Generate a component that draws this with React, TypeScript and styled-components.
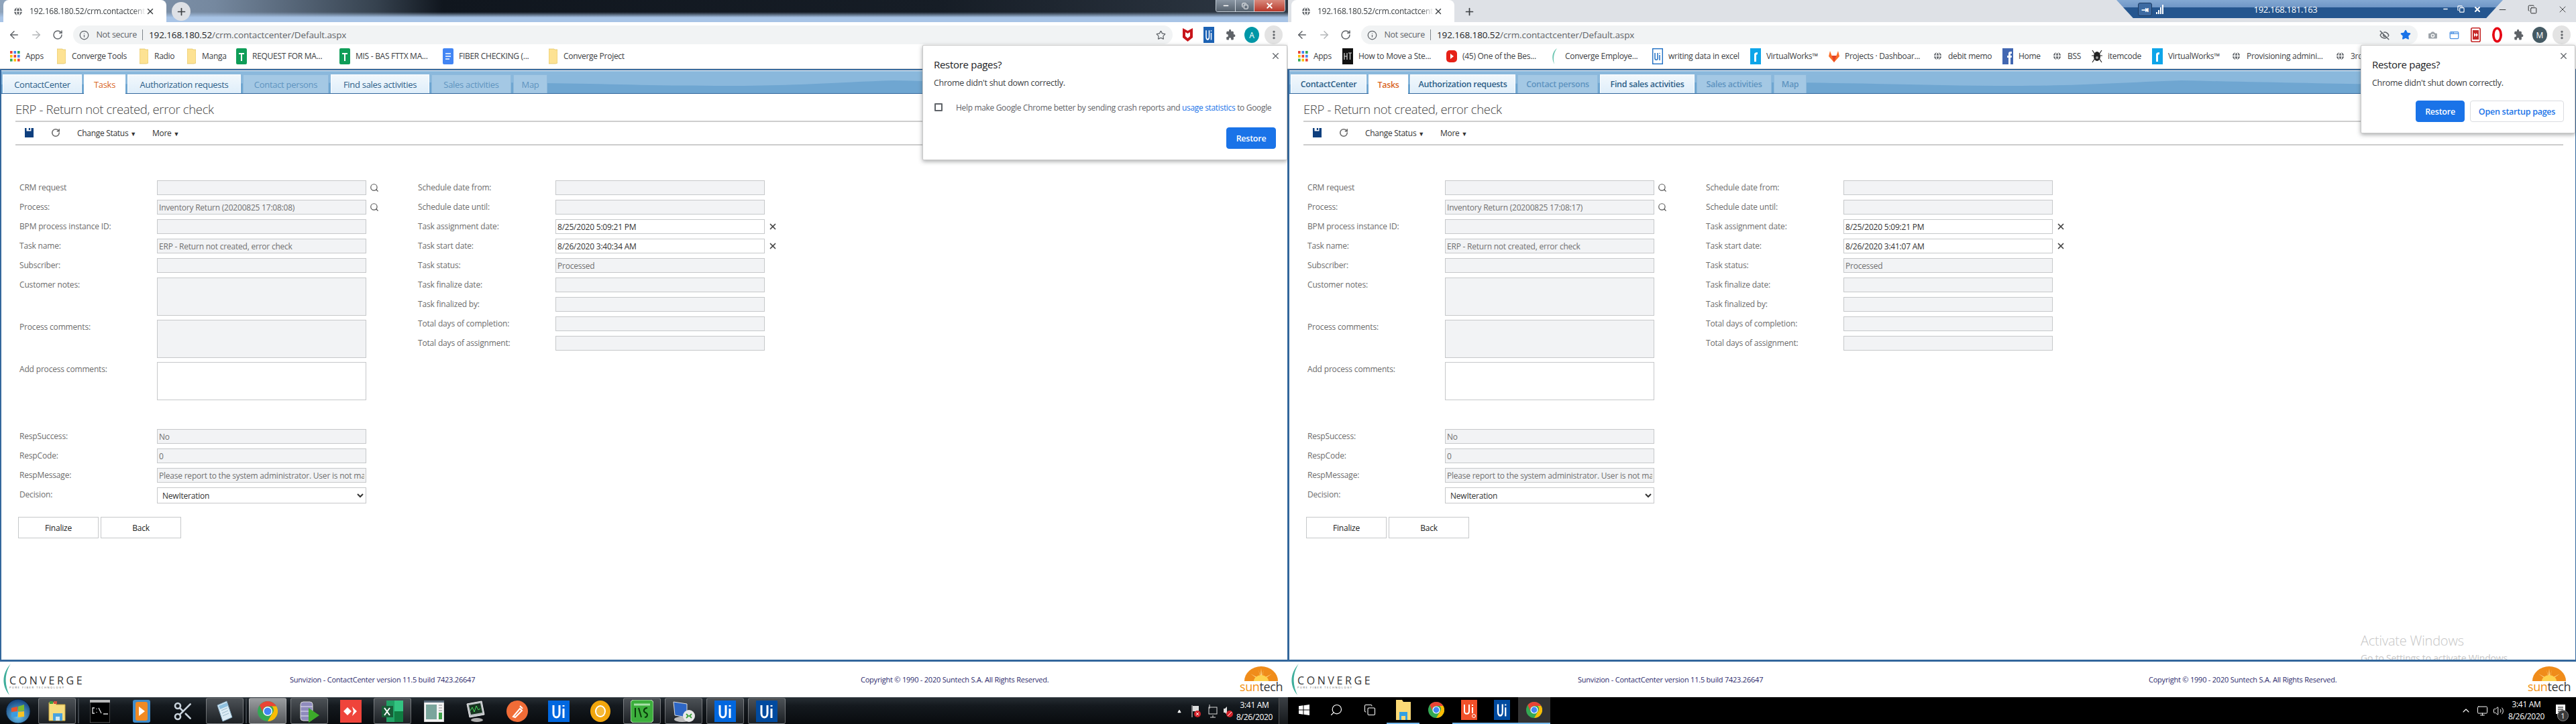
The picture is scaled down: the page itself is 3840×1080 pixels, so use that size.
import React from 'react';
import styled, { createGlobalStyle } from 'styled-components';
import {
  ArrowLeft, ArrowRight, RotateCw, Info, Star, X, Plus, Search, EyeOff, Globe, MoreVertical,
  Minus, Copy, Camera, AppWindow, ChevronUp, Monitor, Volume2, Scissors, Triangle,
} from 'lucide-react';

const FONT = '"Open Sans", "Noto Sans", "Liberation Sans", sans-serif';

const GlobalStyle = createGlobalStyle`
  html, body { margin: 0; padding: 0; background: #fff; }
  body { font-family: ${FONT}; }
  * { box-sizing: border-box; }
`;

const Desktop = styled.div`
  display: flex;
  width: 3840px;
  height: 1080px;
`;

const ScreenBox = styled.div`
  position: relative;
  display: flex;
  flex-direction: column;
  width: 1920px;
  height: 1080px;
  overflow: hidden;
`;

/* ---------- browser chrome ---------- */

const TabStrip = styled.div<{ $glass: boolean }>`
  display: flex;
  align-items: flex-start;
  height: 33px;
  padding-left: 5px;
  background: ${(p) => (p.$glass
    ? 'linear-gradient(to bottom, transparent 0, transparent 18px, #a8c4e6 26px), linear-gradient(to right, #8fa4bc 0, #75889f 320px, #36424f 560px, #10161e 660px, #161d26 1400px, #2e3844 1900px)'
    : '#dee1e6')};
`;

const BrowserTab = styled.div`
  display: flex;
  align-items: center;
  width: 243px;
  height: 33px;
  padding: 0 12px 0 14px;
  background: #fff;
  border-radius: 8px 8px 0 0;
  font-size: 12px;
  color: #3c4043;
`;

const TabTitle = styled.span`
  width: 173px;
  margin-left: 9px;
  overflow: hidden;
  white-space: nowrap;
  letter-spacing: -0.25px;
  -webkit-mask-image: linear-gradient(to right, #000 90%, transparent);
`;

const NewTab = styled.div<{ $circle: boolean }>`
  display: flex;
  align-items: center;
  justify-content: center;
  width: 28px;
  height: 28px;
  margin: 3px 0 0 8px;
  border-radius: 50%;
  color: #3c4043;
  background: ${(p) => (p.$circle ? '#dee1e6' : 'transparent')};
`;

const WinControls = styled.div`
  display: flex;
  margin-left: auto;
  margin-right: 4px;
  height: 18px;
  border: 1px solid #c3ccd6;
  border-top: none;
  border-radius: 0 0 4px 4px;
  overflow: hidden;
`;

const WinControl = styled.div<{ $close?: boolean; $w: number }>`
  display: flex;
  align-items: center;
  justify-content: center;
  width: ${(p) => p.$w}px;
  color: #fff;
  background: ${(p) => (p.$close
    ? 'linear-gradient(#d9897c, #b8392b)'
    : 'linear-gradient(#8b97a4, #56616d)')};
  border-left: 1px solid #cfd6de;
  &:first-child { border-left: none; }
`;

const PlainControls = styled.div`
  display: flex;
  align-items: center;
  gap: 30px;
  height: 28px;
  margin-left: auto;
  margin-right: 12px;
  color: #222;
`;

const RemoteBar = styled.div`
  position: absolute;
  top: 0;
  left: 1235px;
  width: 576px;
  height: 27px;
  display: flex;
  align-items: center;
  padding: 0 32px;
  color: #fff;
  font-size: 13px;
  letter-spacing: -0.3px;
  background: linear-gradient(#84a9d3 0, #6f96c6 40%, #25568f 42%, #25568f 100%);
  clip-path: polygon(0 0, 100% 0, 95.7% 100%, 4.3% 100%);
`;

const RemotePin = styled.div`
  display: flex;
  align-items: center;
  justify-content: center;
  width: 21px;
  height: 20px;
  border: 1px solid #1d3c63;
  border-radius: 3px;
  background: #3d6aa1;
  font-weight: 700;
  font-size: 13px;
`;

const SignalBars = styled.div`
  display: flex;
  align-items: flex-end;
  gap: 1px;
  height: 14px;
  margin-left: 6px;
  i { display: block; width: 2px; background: #fff; }
  i:nth-child(1) { height: 3px; }
  i:nth-child(2) { height: 6px; }
  i:nth-child(3) { height: 10px; }
  i:nth-child(4) { height: 14px; }
`;

const RemoteTitle = styled.span`
  flex: 1;
  text-align: center;
  margin-right: 52px;
`;

const RemoteActions = styled.div`
  display: flex;
  align-items: center;
  gap: 13px;
`;

const Toolbar = styled.div`
  display: flex;
  align-items: flex-start;
  height: 33px;
  padding: 5px 8px 0 5px;
  background: #fff;
`;

const NavButton = styled.div<{ $dim?: boolean }>`
  display: flex;
  align-items: center;
  justify-content: center;
  width: 32.5px;
  height: 28px;
  color: ${(p) => (p.$dim ? '#b4b6b9' : '#5f6368')};
`;

const Omnibox = styled.div`
  flex: 1;
  display: flex;
  align-items: center;
  height: 28px;
  margin: 0 6px;
  padding: 0 10px 0 9px;
  background: #f1f3f4;
  border-radius: 14px;
  color: #5f6368;
  font-size: 13.5px;
`;

const NotSecure = styled.span`
  margin-left: 11px;
  padding-right: 8px;
  border-right: 1px solid #80868b;
  line-height: 16px;
  font-size: 12.5px;
  letter-spacing: -0.3px;
`;

const Url = styled.span`
  margin-left: 9px;
  flex: 1;
  font-size: 13.5px;
  letter-spacing: -0.1px;
  color: #5f6368;
  b { font-weight: 400; color: #202124; }
`;

const OmniIcon = styled.span<{ $w: number }>`
  display: flex;
  justify-content: center;
  width: ${(p) => p.$w}px;
`;

const ExtSlot = styled.div`
  display: flex;
  align-items: center;
  justify-content: center;
  width: 32px;
  height: 28px;
`;

const Avatar = styled.div<{ $bg: string }>`
  display: flex;
  align-items: center;
  justify-content: center;
  width: 22px;
  height: 24px;
  border-radius: 50%;
  font-size: 12px;
  color: #fff;
  background: ${(p) => p.$bg};
`;

const MenuButton = styled(ExtSlot)`
  width: 27px;
  border-radius: 50%;
  margin-left: 3px;
  background: #e3e3e3;
  color: #5f6368;
`;

const BookmarkBar = styled.div`
  display: flex;
  align-items: center;
  height: 37px;
  padding: 0 0 1px 14px;
  background: #fff;
  border-bottom: 1px solid #cfd1d4;
  overflow: hidden;
`;

const Bookmark = styled.div<{ $w: number }>`
  display: flex;
  align-items: center;
  flex: none;
  gap: 8px;
  width: ${(p) => p.$w}px;
  font-size: 12px;
  letter-spacing: -0.28px;
  color: #3c4043;
  white-space: nowrap;
`;

const BmIcon = styled.span`
  display: flex;
  justify-content: center;
  flex: none;
  width: 16px;
`;

/* ---------- page frame ---------- */

const Frame = styled.div`
  position: relative;
  flex: 1;
  min-height: 0;
  display: flex;
  flex-direction: column;
  padding-top: 1px;
  background: #fff;
  border-style: solid;
  border-color: #33679c;
  border-width: 2px 1px 3px 2px;
  overflow: hidden;
`;

const TabBand = styled.div`
  position: relative;
  display: flex;
  align-items: flex-end;
  gap: 3px;
  flex: none;
  height: 34px;
  padding-left: 2px;
  border-bottom: 1px solid #33679c;
  background: #6fa6d1;
`;

const BandWave = styled.svg`
  position: absolute;
  top: 0;
  left: 0;
`;

const NavTab = styled.div<{ $w: number; $kind: 'on' | 'off' | 'active'; $heavy: boolean }>`
  position: relative;
  display: flex;
  align-items: center;
  justify-content: center;
  width: ${(p) => p.$w}px;
  height: ${(p) => (p.$kind === 'active' ? 29 : 28)}px;
  margin-bottom: ${(p) => (p.$kind === 'active' ? -1 : 0)}px;
  font-size: ${(p) => (p.$heavy ? 12.5 : 13)}px;
  font-weight: ${(p) => (p.$heavy ? 600 : 500)};
  letter-spacing: -0.3px;
  white-space: nowrap;
  color: ${(p) => (p.$kind === 'active' ? '#d9661f' : p.$kind === 'on' ? '#2d5f88' : '#5f94c0')};
  background: ${(p) => (p.$kind === 'active' ? '#fff' : p.$kind === 'on' ? 'linear-gradient(#f2f8fc, #dfeefa)' : '#a4c8e4')};
  border: 1px solid ${(p) => (p.$kind === 'active' ? '#fff' : p.$kind === 'on' ? '#fff' : '#8fbadc')};
  border-bottom: none;
`;

const Heading = styled.h1`
  flex: none;
  height: 42px;
  margin: 0 18px 0 21px;
  padding-top: 9px;
  font-size: 18.5px;
  font-weight: 300;
  line-height: 27px;
  letter-spacing: -0.35px;
  color: #444;
  border-bottom: 2px solid #cdcdcd;
`;

const ActionBar = styled.div`
  display: flex;
  align-items: center;
  flex: none;
  height: 35px;
  margin: 0 18px 0 21px;
  padding: 0 0 1px 14px;
  font-size: 12px;
  letter-spacing: -0.3px;
  color: #333;
  border-bottom: 2px solid #cdcdcd;
`;

const ActionIcon = styled.span<{ $w: number }>`
  display: flex;
  width: ${(p) => p.$w}px;
`;

const ActionMenu = styled.span<{ $w: number }>`
  width: ${(p) => p.$w}px;
  small { font-size: 9px; margin-left: 3px; }
`;

const FormArea = styled.div`
  display: flex;
  padding: 52px 0 0 27px;
`;

const FormColumn = styled.div<{ $w?: number }>`
  display: flex;
  flex-direction: column;
  width: ${(p) => (p.$w ? `${p.$w}px` : 'auto')};
`;

const Row = styled.div<{ $after?: number }>`
  display: flex;
  align-items: flex-start;
  margin-bottom: ${(p) => p.$after ?? 7}px;
`;

const Label = styled.label`
  flex: none;
  width: 205px;
  font-size: 12px;
  line-height: 22px;
  letter-spacing: -0.17px;
  color: #6c6c6c;
`;

const fieldCss = `
  flex: none;
  width: 312px;
  padding: 0 2px;
  border: 1px solid #c6c8ca;
  border-radius: 0;
  outline: none;
  font-family: ${FONT};
  font-size: 12px;
  letter-spacing: -0.22px;
`;

const Field = styled.input<{ $ro?: boolean }>`
  ${fieldCss}
  height: 22px;
  background: ${(p) => (p.$ro ? '#f2f3f5' : '#fff')};
  color: ${(p) => (p.$ro ? '#707070' : '#333')};
`;

const Area = styled.textarea<{ $ro?: boolean }>`
  ${fieldCss}
  display: block;
  height: 57px;
  resize: none;
  background: ${(p) => (p.$ro ? '#f2f3f5' : '#fff')};
`;

const Dropdown = styled.select`
  ${fieldCss}
  height: 24px;
  padding-left: 3px;
  background: #fff;
  color: #333;
`;

const RowIcon = styled.span<{ $gap: number }>`
  display: flex;
  height: 22px;
  align-items: center;
  margin-left: ${(p) => p.$gap}px;
  color: #555;
`;

const ButtonRow = styled.div`
  display: flex;
  gap: 3px;
  margin: 20px 0 0 -2px;
`;

const FormButton = styled.button`
  width: 120px;
  height: 32px;
  background: #fff;
  border: 1px solid #c6c8ca;
  font-family: ${FONT};
  font-size: 12px;
  letter-spacing: -0.2px;
  color: #222;
`;

const Watermark = styled.div`
  position: absolute;
  left: 1597px;
  bottom: -8px;
  color: #c6c6c6;
  font-size: 14px;
  line-height: 20px;
  letter-spacing: -0.2px;
  strong {
    display: block;
    margin-bottom: 3px;
    font-size: 20px;
    font-weight: 300;
    line-height: 26px;
  }
`;

/* ---------- restore pages bubble ---------- */

const Bubble = styled.div<{ $w: number }>`
  position: absolute;
  top: 67px;
  right: 1px;
  width: ${(p) => p.$w}px;
  padding: 18px 16px 16px 16px;
  background: #fff;
  border: 1px solid #c8c8c8;
  border-radius: 2px;
  box-shadow: 0 2px 6px rgba(60, 64, 67, 0.45);
`;

const BubbleClose = styled.span`
  position: absolute;
  top: 8px;
  right: 9px;
  display: flex;
  color: #5f6368;
`;

const BubbleTitle = styled.div`
  font-size: 15px;
  line-height: 20px;
  letter-spacing: -0.3px;
  color: #202124;
`;

const BubbleText = styled.div`
  margin: 9px 0 17px;
  font-size: 12.5px;
  line-height: 18px;
  letter-spacing: -0.28px;
  color: #3c4043;
`;

const CheckRow = styled.div`
  display: flex;
  align-items: center;
  gap: 20px;
  height: 20px;
  margin: 2px 0 20px 1px;
  font-size: 12px;
  letter-spacing: -0.33px;
  white-space: nowrap;
  color: #5f6368;
  a { color: #1a73e8; }
`;

const CheckBox = styled.span`
  flex: none;
  width: 12px;
  height: 12px;
  border: 2px solid #5f6368;
  border-radius: 1px;
`;

const BubbleActions = styled.div`
  display: flex;
  justify-content: flex-end;
  gap: 8px;
`;

const BubbleButton = styled.div<{ $primary?: boolean; $w: number }>`
  display: flex;
  align-items: center;
  justify-content: center;
  width: ${(p) => p.$w}px;
  height: 32px;
  border-radius: 4px;
  font-size: 12.5px;
  font-weight: 600;
  letter-spacing: -0.25px;
  color: ${(p) => (p.$primary ? '#fff' : '#1a73e8')};
  background: ${(p) => (p.$primary ? '#1a73e8' : '#fff')};
  border: 1px solid ${(p) => (p.$primary ? '#1a73e8' : '#dadce0')};
`;

/* ---------- footer ---------- */

const Footer = styled.div`
  display: flex;
  align-items: center;
  flex: none;
  height: 53px;
  padding: 0 4px 0 3px;
  background: #fff;
  font-size: 11px;
  letter-spacing: -0.22px;
  color: #2c2a6c;
`;

const ConvergeLogo = styled.div`
  position: relative;
  flex: none;
  display: flex;
  flex-direction: column;
  justify-content: center;
  width: 126px;
  height: 48px;
  padding: 8px 0 0 11px;
  color: #333;
  font-size: 16px;
  line-height: 16px;
  letter-spacing: 3.6px;
  small {
    font-size: 4px;
    line-height: 6px;
    letter-spacing: 1.6px;
    white-space: nowrap;
    color: #555;
  }
  svg { position: absolute; left: 0; top: 0; }
`;

const Version = styled.span`
  width: 851px;
  margin-left: 303px;
  white-space: nowrap;
`;

const Copyright = styled.span`
  flex: 1;
  white-space: nowrap;
`;

const SuntechLogo = styled.div`
  display: flex;
  flex-direction: column;
  align-items: center;
  flex: none;
  width: 72px;
  font-size: 18px;
  line-height: 17px;
  letter-spacing: -0.4px;
  color: #3a3a3a;
  b { font-weight: 500; color: #f29111; }
`;

/* ---------- taskbars ---------- */

const Win7Bar = styled.div`
  display: flex;
  align-items: stretch;
  flex: none;
  height: 40px;
  background: linear-gradient(#262d33 0, #14191e 30%, #080b0e 100%);
  border-top: 1px solid #3e464d;
`;

const Win10Bar = styled.div`
  display: flex;
  align-items: stretch;
  flex: none;
  height: 40px;
  background: #000;
`;

const OrbSlot = styled.div`
  display: flex;
  align-items: center;
  justify-content: center;
  width: 54px;
`;

const Win7Slot = styled.div<{ $boxed?: boolean; $lit?: boolean }>`
  display: flex;
  align-items: center;
  justify-content: center;
  width: 56px;
  margin: 0 3px;
  border-radius: 3px;
  ${(p) => (p.$boxed ? `border: 1px solid rgba(255,255,255,.3);
    background: linear-gradient(${p.$lit ? '#9a9da0, #55585b' : '#4c5156, #1c2024'});` : '')}
`;

const Win7Gap = styled.div`
  width: 2px;
  margin: 1px 0;
  background: #3b4147;
`;

const Win10Slot = styled.div<{ $w: number; $active?: boolean; $open?: boolean }>`
  display: flex;
  align-items: center;
  justify-content: center;
  width: ${(p) => p.$w}px;
  color: #fff;
  background: ${(p) => (p.$active ? '#333' : 'transparent')};
  border-bottom: 2px solid ${(p) => (p.$open ? '#76b9ed' : 'transparent')};
`;

const Mirrored = styled.span`
  display: flex;
  transform: scaleX(-1);
`;

const Tray = styled.div`
  display: flex;
  align-items: center;
  margin-left: auto;
  color: #fff;
`;

const TrayIcon = styled.span<{ $w: number }>`
  display: flex;
  justify-content: center;
  width: ${(p) => p.$w}px;
`;

const Clock = styled.div<{ $w: number }>`
  width: ${(p) => p.$w}px;
  text-align: center;
  font-size: 12px;
  line-height: 18px;
  letter-spacing: -0.3px;
  color: #fff;
`;

const ShowDesktop = styled.div`
  align-self: stretch;
  width: 14px;
  margin-left: 9px;
  border-left: 1px solid #555;
  background: linear-gradient(#3a3f44, #15181b);
`;

const NoticeWrap = styled.span`
  position: relative;
  display: flex;
  margin-left: 14px;
  margin-right: 16px;
`;

const NoticeBadge = styled.span`
  position: absolute;
  right: -5px;
  bottom: -7px;
  width: 17px;
  height: 17px;
  border-radius: 50%;
  background: #3a3a3a;
  border: 1px solid #888;
  font-size: 11px;
  line-height: 15px;
  text-align: center;
`;

/* ---------- drawings ---------- */

const ChromeLogo = ({ size = 30 }: { size?: number }) => (
  <svg width={size} height={size} viewBox="0 0 24 24">
    <circle cx="12" cy="12" r="12" fill="#34a853" />
    <path d="M2.4 4.8A12 12 0 0 1 22.4 6H12a6 6 0 0 0-5.6 8z" fill="#ea4335" />
    <path d="M22.4 6A12 12 0 0 1 12 24l5.2-9A6 6 0 0 0 17 6z" fill="#fbbc05" />
    <circle cx="12" cy="12" r="5.6" fill="#fff" />
    <circle cx="12" cy="12" r="4.4" fill="#4285f4" />
  </svg>
);

const FolderBm = () => (
  <svg width="13" height="24" viewBox="0 0 13 24">
    <path d="M0 1h8l1 1h4v20l-3 1H0z" fill="#fde293" stroke="#d9b94e" strokeWidth=".6" />
  </svg>
);

const AppsGrid = () => (
  <svg width="15" height="16" viewBox="0 0 15 16">
    {['#ea4335', '#4285f4', '#34a853', '#fbbc05', '#ea4335', '#4285f4', '#34a853', '#fbbc05', '#ea4335'].map((c, i) => (
      <rect key={i} x={(i % 3) * 5.5} y={Math.floor(i / 3) * 5.8} width="3.6" height="4" fill={c} />
    ))}
  </svg>
);

const SheetIcon = () => (
  <svg width="16" height="24" viewBox="0 0 16 24">
    <rect width="16" height="24" rx="2" fill="#0f9d58" />
    <path d="M4 8h8M8 8v11" stroke="#fff" strokeWidth="2" />
  </svg>
);

const DocIcon = () => (
  <svg width="16" height="24" viewBox="0 0 16 24">
    <rect width="16" height="24" rx="2" fill="#4285f4" />
    <path d="M4 8h8M4 12h8M4 16h6" stroke="#fff" strokeWidth="1.6" />
  </svg>
);

const HtgIcon = () => (
  <svg width="16" height="24" viewBox="0 0 16 24">
    <rect width="16" height="24" fill="#111" />
    <path d="M3 7v10M7 7v10M3 12h4M9 7h5M11.5 7v10" stroke="#ddd" strokeWidth="1.2" />
  </svg>
);

const YoutubeIcon = () => (
  <svg width="16" height="24" viewBox="0 0 16 24">
    <rect y="3" width="16" height="18" rx="5" fill="#e62117" />
    <path d="M6 8l5 4-5 4z" fill="#fff" />
  </svg>
);

const LeafIcon = () => (
  <svg width="10" height="24" viewBox="0 0 10 24">
    <path d="M9 0C2 5 0 14 5 24 3 15 4 7 9 0z" fill="#6fc7b3" />
  </svg>
);

const UiOutline = () => (
  <svg width="16" height="24" viewBox="0 0 16 24">
    <rect x=".7" y=".7" width="14.6" height="22.6" fill="#fff" stroke="#1f6fc4" strokeWidth="1.4" />
    <path d="M4 7v8c0 3 4 3 4 0V7M11 7v1M11 10v8" fill="none" stroke="#1f6fc4" strokeWidth="1.5" />
  </svg>
);

const RIcon = () => (
  <svg width="16" height="24" viewBox="0 0 16 24">
    <rect width="16" height="24" fill="#0ea5e9" />
    <path d="M6 20V9c0-2 2-3 5-3v3c-2 0-2 1-2 2v9z" fill="#fff" />
  </svg>
);

const GitlabIcon = () => (
  <svg width="16" height="24" viewBox="0 0 16 24">
    <path d="M8 21L0 12l2-8 2.500 7h7L14 4l2 8z" fill="#fc6d26" />
    <path d="M8 21l-3.500-10h7z" fill="#e24329" />
  </svg>
);

const FbIcon = () => (
  <svg width="16" height="24" viewBox="0 0 16 24">
    <rect width="16" height="24" fill="#4267b2" />
    <path d="M9 24V14H7v-3h2V8c0-2 1-3 3-3h2v3h-1c-1 0-1 .5-1 1v2h2l-.4 3H12v10z" fill="#fff" />
  </svg>
);

const SpiderIcon = () => (
  <svg width="16" height="24" viewBox="0 0 16 24">
    <path d="M1 3l4 6M15 3l-4 6M0 11h4M16 11h-4M1 21l4-6M15 21l-4-6" stroke="#222" strokeWidth="1.2" />
    <ellipse cx="8" cy="12" rx="5" ry="7" fill="#222" />
    <circle cx="8" cy="14" r="2" fill="#9a9a9a" />
  </svg>
);

const GlobeBm = ({ size = 15 }: { size?: number }) => (
  <Globe size={size} color="#fff" fill="#5f6368" strokeWidth={2.2} />
);

const McAfee = () => (
  <svg width="15" height="22" viewBox="0 0 15 22">
    <path d="M0 1l4 2 3.500 2L11 3l4-2v14l-7.500 6L0 15z" fill="#c8151b" />
    <path d="M4 7l3.500 2L11 7v6l-3.500 3L4 13z" fill="#fff" />
  </svg>
);

const UiSolid = ({ w = 16, h = 24, bg = '#1c62b4' }: { w?: number; h?: number; bg?: string }) => (
  <svg width={w} height={h} viewBox="0 0 32 32" preserveAspectRatio="none">
    <rect width="32" height="32" fill={bg} />
    <path d="M8 7v12c0 8 9 8 9 0V7M23 7v2M23 12v14" fill="none" stroke="#fff" strokeWidth="3" />
  </svg>
);

const PuzzleSolid = () => (
  <svg width="15" height="18" viewBox="0 0 24 24" preserveAspectRatio="none">
    <path d="M20.500 11H19V7a2 2 0 0 0-2-2h-4V3.500a2.500 2.500 0 0 0-5 0V5H4a2 2 0 0 0-2 2v3.800h1.500a2.700 2.700 0 0 1 0 5.400H2V20a2 2 0 0 0 2 2h3.800v-1.500a2.700 2.700 0 0 1 5.400 0V22H17a2 2 0 0 0 2-2v-4h1.500a2.500 2.500 0 0 0 0-5z" fill="#5f6368" />
  </svg>
);

const RssTile = () => (
  <svg width="15" height="22" viewBox="0 0 15 22">
    <rect x=".8" y=".8" width="13.400" height="20.400" rx="2" fill="#fff" stroke="#c62828" strokeWidth="1.600" />
    <rect x="3" y="4" width="9" height="14" fill="#c62828" />
    <path d="M5 8l3 3-3 3zM8 8l3 3-3 3z" fill="#fff" />
  </svg>
);

const RedStop = () => (
  <svg width="15" height="24" viewBox="0 0 15 24">
    <ellipse cx="7.500" cy="12" rx="7.500" ry="11.500" fill="#e60012" />
    <ellipse cx="7.500" cy="12" rx="3.800" ry="8" fill="#fff" />
  </svg>
);

const SaveIcon = () => (
  <svg width="13" height="14" viewBox="0 0 13 14">
    <path d="M0 0h2.500v4.500h7V0H13v14H0z" fill="#0e3f7e" />
    <rect x="5.800" y="0" width="2.200" height="3" fill="#0e3f7e" />
  </svg>
);

const ConvergeSwoosh = () => (
  <svg width="14" height="48" viewBox="0 0 14 48">
    <path d="M13 0C2 12-3 30 11 47 4 32 3 16 13 0z" fill="#3fae9b" />
  </svg>
);

const SunMark = () => (
  <svg width="50" height="22" viewBox="0 0 50 22">
    <path d="M0 22a25 22 0 0 1 50 0z" fill="#f08c1a" />
    <path d="M25 22L21 5l3 10 1-12 1 12 3-10zM25 22L9 11l11 6zM25 22l16-11-11 6z" fill="#ffe9a8" />
    <path d="M14 22a11 9 0 0 1 22 0z" fill="#ffd24d" />
  </svg>
);

/* win7 taskbar glyphs */
const Orb = () => (
  <svg width="38" height="38" viewBox="0 0 38 38">
    <defs>
      <radialGradient id="orb" cx="50%" cy="70%" r="70%">
        <stop offset="0" stopColor="#6cc6f0" />
        <stop offset="1" stopColor="#123f7a" />
      </radialGradient>
    </defs>
    <circle cx="19" cy="19" r="18" fill="url(#orb)" stroke="#0b1c30" />
    <path d="M9 14l9-2v7l-9 1z" fill="#e8532c" />
    <path d="M19 12l9-3v9l-9 1z" fill="#7bbb31" />
    <path d="M9 21l9-1v7l-9 1z" fill="#3a9be0" />
    <path d="M19 20l9-1v8l-9 1z" fill="#f7c325" />
  </svg>
);

const ExplorerIcon = () => (
  <svg width="30" height="34" viewBox="0 0 30 34">
    <path d="M3 4h9l2 3h13v24H3z" fill="#f6dc7e" stroke="#c6a43f" />
    <rect x="9" y="20" width="14" height="11" fill="#4aa3df" />
    <rect x="13" y="25" width="6" height="6" fill="#cfe9f7" />
    <rect x="4" y="2" width="5" height="4" fill="#3e9e3e" />
    <rect x="10" y="2" width="5" height="4" fill="#d94f3d" />
  </svg>
);

const CmdIcon = () => (
  <svg width="30" height="34" viewBox="0 0 30 34">
    <rect width="30" height="34" fill="#000" stroke="#888" />
    <rect width="30" height="4" fill="#b8b8b8" />
    <path d="M7 12H4v8h3M10 13v1M10 18v1M13 12l4 8M20 21h7" fill="none" stroke="#ddd" strokeWidth="1.300" />
  </svg>
);

const WmpIcon = () => (
  <svg width="26" height="34" viewBox="0 0 26 34">
    <rect width="26" height="34" rx="3" fill="#3f8ccb" />
    <rect x="4" y="3" width="18" height="28" rx="3" fill="#f08a24" />
    <path d="M9 10l9 7-9 7z" fill="#fff" />
  </svg>
);

const NotepadIcon = () => (
  <svg width="30" height="34" viewBox="0 0 30 34">
    <path d="M4 8L18 2l8 24-14 6z" fill="#dcecf5" stroke="#7fa5bd" />
    <path d="M6 9l12-5 2 5-12 5z" fill="#8ec0df" />
    <path d="M10 16l9-4M11 20l9-4M12 24l9-4" stroke="#9ab8c9" />
  </svg>
);

const DbIcon = () => (
  <svg width="32" height="34" viewBox="0 0 32 34">
    <rect x="3" y="3" width="18" height="28" rx="4" fill="#8f8bbd" stroke="#ddd" />
    <path d="M3 10h18M3 17h18M3 24h18" stroke="#e8e6f4" />
    <path d="M15 12l16 11-16 11z" fill="#3dab2a" />
  </svg>
);

const AnyDeskIcon = () => (
  <svg width="32" height="34" viewBox="0 0 32 34">
    <rect width="32" height="34" fill="#ef443b" />
    <path d="M11 11l6 6-6 6-6-6zM18 10l7 7-7 7 2-7z" fill="#fff" />
  </svg>
);

const ExcelIcon = () => (
  <svg width="34" height="34" viewBox="0 0 34 34">
    <rect x="8" y="1" width="25" height="32" fill="#21a366" />
    <rect x="20" y="1" width="13" height="16" fill="#33c481" />
    <rect x="20" y="17" width="13" height="16" fill="#107c41" />
    <rect x="1" y="9" width="17" height="17" fill="#185c37" />
    <path d="M5 12l8 11M13 12l-8 11" stroke="#fff" strokeWidth="2" />
  </svg>
);

const SheetWindow = () => (
  <svg width="30" height="32" viewBox="0 0 30 32">
    <rect width="30" height="32" fill="#f3f3f3" stroke="#aaa" />
    <rect width="30" height="3" fill="#5a6b7a" />
    <rect x="3" y="6" width="16" height="22" fill="#7aa59c" />
    <path d="M22 7h5M22 11h5M22 15h5" stroke="#888" />
    <rect x="22" y="18" width="5" height="10" fill="#3fa24a" />
  </svg>
);

const ScopeIcon = () => (
  <svg width="30" height="34" viewBox="0 0 30 34">
    <path d="M2 6l22-4 4 20-22 4z" fill="#b9bdc1" stroke="#eee" />
    <path d="M5 8l17-3 3 14-17 3z" fill="#17331f" />
    <path d="M7 16l3-5 3 7 3-9 3 6 3-2" fill="none" stroke="#46d65a" />
    <ellipse cx="17" cy="30" rx="9" ry="3" fill="#aaa" />
  </svg>
);

const PostmanIcon = () => (
  <svg width="32" height="32" viewBox="0 0 32 32" preserveAspectRatio="none">
    <circle cx="16" cy="16" r="16" fill="#f06c37" />
    <path d="M10 24l10-12 3 3-10 10zM20 8l4 4" stroke="#fff" strokeWidth="2" fill="none" />
  </svg>
);

const CanaryIcon = () => (
  <svg width="30" height="32" viewBox="0 0 30 32">
    <ellipse cx="15" cy="16" rx="15" ry="16" fill="#f2a60c" />
    <ellipse cx="15" cy="16" rx="8" ry="9" fill="#fff" />
    <ellipse cx="15" cy="16" rx="6" ry="7" fill="#f5b93a" />
  </svg>
);

const RasIcon = () => (
  <svg width="34" height="34" viewBox="0 0 34 34">
    <rect width="34" height="34" rx="5" fill="#3cae3c" stroke="#cfe9cf" />
    <path d="M5 7h24" stroke="#a8e0a8" strokeWidth="3" />
    <path d="M7 12v14M12 12l4 14M21 26c4 0 6-5 1-7-4-2-2-7 3-7" fill="none" stroke="#0a3a0a" strokeWidth="2" />
  </svg>
);

const RemoteDesk = () => (
  <svg width="34" height="34" viewBox="0 0 34 34">
    <path d="M2 3l20 3v20L4 23z" fill="#2d66c5" stroke="#ddd" />
    <ellipse cx="15" cy="29" rx="12" ry="4" fill="#bbb" />
    <circle cx="25" cy="24" r="9" fill="#e8e8e8" />
    <path d="M21 21l3 3-3 3M29 21l-3 3 3 3" fill="none" stroke="#3aa13a" strokeWidth="1.800" />
  </svg>
);

const FlagX = () => (
  <svg width="16" height="20" viewBox="0 0 16 20">
    <path d="M2 1v18" stroke="#ddd" />
    <path d="M3 2h9v8H3z" fill="#ddd" />
    <circle cx="10" cy="14" r="5" fill="#d3222a" />
    <path d="M8 12l4 4M12 12l-4 4" stroke="#fff" />
  </svg>
);

const NetMonitor = () => (
  <svg width="16" height="20" viewBox="0 0 16 20">
    <rect x="3" y="4" width="12" height="10" fill="none" stroke="#ddd" />
    <path d="M4 0v6M9 16v3M5 19h8" stroke="#ddd" />
  </svg>
);

const MutedSpeaker = () => (
  <svg width="16" height="20" viewBox="0 0 16 20">
    <path d="M1 6h2l3-3v12L3 12H1z" fill="#ddd" />
    <circle cx="10" cy="14" r="5" fill="#d3222a" />
    <path d="M7 17l6-6" stroke="#fff" />
  </svg>
);

const WinLogo = () => (
  <svg width="16" height="16" viewBox="0 0 16 16">
    <path d="M0 2.300l6.500-1v6.200H0zM7.500 1.200L16 0v7.500H7.500zM0 8.500h6.500v6.200l-6.500-1zM7.500 8.500H16V16l-8.500-1.200z" fill="#fff" />
  </svg>
);

const Explorer10 = () => (
  <svg width="22" height="30" viewBox="0 0 22 30">
    <path d="M0 0h9l2 3h11v27H0z" fill="#fbd976" />
    <rect x="5" y="18" width="12" height="12" fill="#33a0e4" />
    <rect x="8" y="24" width="6" height="6" fill="#fbd976" />
  </svg>
);

const UiRed = () => (
  <svg width="24" height="30" viewBox="0 0 24 30">
    <rect width="24" height="30" fill="#f1502a" />
    <path d="M5 7v10c0 5 7 5 7 0V7M17 7v2M17 11v9" fill="none" stroke="#fff" strokeWidth="2" />
    <circle cx="19" cy="24" r="2.500" fill="none" stroke="#fff" />
  </svg>
);

/* ---------- data ---------- */

type BookmarkItem = { icon: React.ReactNode; label: string; w: number };

const apps: BookmarkItem = { icon: <AppsGrid />, label: 'Apps', w: 69 };

const leftBookmarks: BookmarkItem[] = [
  apps,
  { icon: <FolderBm />, label: 'Converge Tools', w: 123 },
  { icon: <FolderBm />, label: 'Radio', w: 71 },
  { icon: <FolderBm />, label: 'Manga', w: 75 },
  { icon: <SheetIcon />, label: 'REQUEST FOR MA...', w: 154 },
  { icon: <SheetIcon />, label: 'MIS - BAS FTTX MA...', w: 154 },
  { icon: <DocIcon />, label: 'FIBER CHECKING (...', w: 156 },
  { icon: <FolderBm />, label: 'Converge Project', w: 130 },
];

const rightBookmarks: BookmarkItem[] = [
  { ...apps, w: 67 },
  { icon: <HtgIcon />, label: 'How to Move a Ste...', w: 155 },
  { icon: <YoutubeIcon />, label: '(45) One of the Bes...', w: 153 },
  { icon: <LeafIcon />, label: 'Converge Employe...', w: 154 },
  { icon: <UiOutline />, label: 'writing data in excel', w: 146 },
  { icon: <RIcon />, label: 'VirtualWorks™', w: 117 },
  { icon: <GitlabIcon />, label: 'Projects · Dashboar...', w: 154 },
  { icon: <GlobeBm />, label: 'debit memo', w: 105 },
  { icon: <FbIcon />, label: 'Home', w: 73 },
  { icon: <GlobeBm />, label: 'BSS', w: 60 },
  { icon: <SpiderIcon />, label: 'itemcode', w: 90 },
  { icon: <RIcon />, label: 'VirtualWorks™', w: 117 },
  { icon: <GlobeBm />, label: 'Provisioning admini...', w: 155 },
  { icon: <GlobeBm />, label: '3rd Party', w: 80 },
];

type NavTabItem = { label: string; w: number; kind: 'on' | 'off' | 'active' };

const navLabels: { label: string; kind: NavTabItem['kind'] }[] = [
  { label: 'ContactCenter', kind: 'on' },
  { label: 'Tasks', kind: 'active' },
  { label: 'Authorization requests', kind: 'on' },
  { label: 'Contact persons', kind: 'off' },
  { label: 'Find sales activities', kind: 'on' },
  { label: 'Sales activities', kind: 'off' },
  { label: 'Map', kind: 'off' },
];

const leftNavWidths = [118, 62, 169, 128, 147, 119, 51];
const rightNavWidths = [113, 59, 157, 120, 141, 112, 49];

const win7Icons: React.ReactNode[][] = [
  [<CmdIcon key="c" />, <WmpIcon key="w" />, <Scissors key="s" size={32} color="#c9d3dc" />],
  [<SheetWindow key="a" />, <ScopeIcon key="b" />, <PostmanIcon key="d" />, <UiSolid key="e" w={32} h={32} bg="#0067df" />, <CanaryIcon key="f" />],
];

/* ---------- pieces ---------- */

const Bookmarks = ({ items }: { items: BookmarkItem[] }) => (
  <BookmarkBar>
    {items.map((b, i) => (
      <Bookmark key={i} $w={b.w}>
        <BmIcon>{b.icon}</BmIcon>
        {b.label}
      </Bookmark>
    ))}
  </BookmarkBar>
);

const TextRow = ({ label, value, ro = true, icon }: {
  label: string; value?: string; ro?: boolean; icon?: 'search' | 'clear';
}) => (
  <Row>
    <Label>{label}</Label>
    <Field $ro={ro} readOnly value={value ?? ''} />
    {icon === 'search' && <RowIcon $gap={5}><Search size={14} strokeWidth={2} /></RowIcon>}
    {icon === 'clear' && <RowIcon $gap={5}><X size={14} strokeWidth={3} color="#444" /></RowIcon>}
  </Row>
);

const AreaRow = ({ label, ro = true, after = 6 }: { label: string; ro?: boolean; after?: number }) => (
  <Row $after={after}>
    <Label>{label}</Label>
    <Area $ro={ro} readOnly value="" />
  </Row>
);

const TaskForm = ({ process, started }: { process: string; started: string }) => (
  <FormArea>
    <FormColumn $w={594}>
      <TextRow label="CRM request" icon="search" />
      <TextRow label="Process:" value={process} icon="search" />
      <TextRow label="BPM process instance ID:" />
      <TextRow label="Task name:" value="ERP - Return not created, error check" />
      <TextRow label="Subscriber:" />
      <AreaRow label="Customer notes:" />
      <AreaRow label="Process comments:" />
      <AreaRow label="Add process comments:" ro={false} after={43} />
      <TextRow label="RespSuccess:" value="No" />
      <TextRow label="RespCode:" value="0" />
      <TextRow label="RespMessage:" value="Please report to the system administrator. User is not mapped to ERP" />
      <Row $after={0}>
        <Label>Decision:</Label>
        <Dropdown defaultValue="NewIteration">
          <option>NewIteration</option>
        </Dropdown>
      </Row>
      <ButtonRow>
        <FormButton>Finalize</FormButton>
        <FormButton>Back</FormButton>
      </ButtonRow>
    </FormColumn>
    <FormColumn>
      <TextRow label="Schedule date from:" />
      <TextRow label="Schedule date until:" />
      <TextRow label="Task assignment date:" value="8/25/2020 5:09:21 PM" ro={false} icon="clear" />
      <TextRow label="Task start date:" value={started} ro={false} icon="clear" />
      <TextRow label="Task status:" value="Processed" />
      <TextRow label="Task finalize date:" />
      <TextRow label="Task finalized by:" />
      <TextRow label="Total days of completion:" />
      <TextRow label="Total days of assignment:" />
    </FormColumn>
  </FormArea>
);

const PageFooter = () => (
  <Footer>
    <ConvergeLogo>
      <ConvergeSwoosh />
      CONVERGE
      <small>PURE FIBER TECHNOLOGY</small>
    </ConvergeLogo>
    <Version>Sunvizion - ContactCenter version 11.5 build 7423.26647</Version>
    <Copyright>Copyright © 1990 - 2020 Suntech S.A. All Rights Reserved.</Copyright>
    <SuntechLogo>
      <SunMark />
      <span><b>sun</b>tech</span>
    </SuntechLogo>
  </Footer>
);

const Page = ({ widths, heavy, process, started, children }: {
  widths: number[]; heavy: boolean; process: string; started: string; children?: React.ReactNode;
}) => (
  <Frame>
    <TabBand>
      <BandWave width="1917" height="33" viewBox="0 0 1917 33">
        <path d="M0 0H1917V19C1760 23 1600 20 1330 14C1240 17 1180 22 1080 22C950 22 850 17 700 17C450 17 250 20 0 20Z" fill="#8ab8dc" />
      </BandWave>
      {navLabels.map((t, i) => (
        <NavTab key={t.label} $w={widths[i]} $kind={t.kind} $heavy={heavy}>{t.label}</NavTab>
      ))}
    </TabBand>
    <Heading>ERP - Return not created, error check</Heading>
    <ActionBar>
      <ActionIcon $w={39}><SaveIcon /></ActionIcon>
      <ActionIcon $w={39}><RotateCw size={14} color="#666" strokeWidth={2.6} /></ActionIcon>
      <ActionMenu $w={112}>Change Status<small>▼</small></ActionMenu>
      <ActionMenu $w={50}>More<small>▼</small></ActionMenu>
    </ActionBar>
    <TaskForm process={process} started={started} />
    {children}
  </Frame>
);

const ExtSlotTail = ({ letter, bg }: { letter: string; bg: string }) => (
  <>
    <ExtSlot><PuzzleSolid /></ExtSlot>
    <ExtSlot><Avatar $bg={bg}>{letter}</Avatar></ExtSlot>
    <MenuButton><MoreVertical size={16} strokeWidth={3} /></MenuButton>
  </>
);

const BrowserToolbar = ({ children, omni }: { children: React.ReactNode; omni: React.ReactNode }) => (
  <Toolbar>
    <NavButton><ArrowLeft size={18} /></NavButton>
    <NavButton $dim><ArrowRight size={18} /></NavButton>
    <NavButton><RotateCw size={16} strokeWidth={2.2} /></NavButton>
    <Omnibox>
      <Info size={15} />
      <NotSecure>Not secure</NotSecure>
      <Url><b>192.168.180.52</b>/crm.contactcenter/Default.aspx</Url>
      {omni}
    </Omnibox>
    {children}
  </Toolbar>
);

const TabLabel = () => (
  <BrowserTab>
    <GlobeBm size={16} />
    <TabTitle>192.168.180.52/crm.contactcenter</TabTitle>
    <X size={14} strokeWidth={2.4} />
  </BrowserTab>
);

const LeftScreen = () => (
  <ScreenBox>
    <TabStrip $glass>
      <TabLabel />
      <NewTab $circle><Plus size={17} strokeWidth={2.4} /></NewTab>
      <WinControls>
        <WinControl $w={28}><Minus size={11} strokeWidth={3} /></WinControl>
        <WinControl $w={28}><Copy size={10} strokeWidth={2.4} /></WinControl>
        <WinControl $w={46} $close><X size={13} strokeWidth={3.4} /></WinControl>
      </WinControls>
    </TabStrip>
    <BrowserToolbar omni={<Star size={15} strokeWidth={2} />}>
      <ExtSlot><McAfee /></ExtSlot>
      <ExtSlot><UiSolid /></ExtSlot>
      <ExtSlotTail letter="A" bg="#0097a7" />
    </BrowserToolbar>
    <Bookmarks items={leftBookmarks} />
    <Page widths={leftNavWidths} heavy={false} process="Inventory Return (20200825 17:08:08)" started="8/26/2020 3:40:34 AM" />
    <PageFooter />
    <Win7Bar>
      <OrbSlot><Orb /></OrbSlot>
      <Win7Slot $boxed><ExplorerIcon /></Win7Slot>
      <Win7Gap />
      {win7Icons[0].map((ic, i) => <Win7Slot key={i}>{ic}</Win7Slot>)}
      <Win7Slot $boxed><NotepadIcon /></Win7Slot>
      <Win7Gap />
      <Win7Slot $boxed $lit><ChromeLogo size={30} /></Win7Slot>
      <Win7Slot $boxed><DbIcon /></Win7Slot>
      <Win7Slot><AnyDeskIcon /></Win7Slot>
      <Win7Slot $boxed><ExcelIcon /></Win7Slot>
      {win7Icons[1].map((ic, i) => <Win7Slot key={i}>{ic}</Win7Slot>)}
      <Win7Slot $boxed><RasIcon /></Win7Slot>
      <Win7Slot $boxed><RemoteDesk /></Win7Slot>
      <Win7Slot $boxed><UiSolid w={32} h={32} bg="#0067df" /></Win7Slot>
      <Win7Slot $boxed><UiSolid w={32} h={32} bg="#004a9f" /></Win7Slot>
      <Tray>
        <TrayIcon $w={24}><Triangle size={6} fill="#fff" strokeWidth={0} /></TrayIcon>
        <TrayIcon $w={25}><FlagX /></TrayIcon>
        <TrayIcon $w={24}><NetMonitor /></TrayIcon>
        <TrayIcon $w={24}><MutedSpeaker /></TrayIcon>
        <Clock $w={54}>3:41 AM<br />8/26/2020</Clock>
        <ShowDesktop />
      </Tray>
    </Win7Bar>
    <Bubble $w={544}>
      <BubbleClose><X size={15} strokeWidth={2} /></BubbleClose>
      <BubbleTitle>Restore pages?</BubbleTitle>
      <BubbleText>Chrome didn&apos;t shut down correctly.</BubbleText>
      <CheckRow>
        <CheckBox />
        <span>Help make Google Chrome better by sending crash reports and <a>usage statistics</a> to Google</span>
      </CheckRow>
      <BubbleActions><BubbleButton $primary $w={74}>Restore</BubbleButton></BubbleActions>
    </Bubble>
  </ScreenBox>
);

const RightScreen = () => (
  <ScreenBox>
    <TabStrip $glass={false}>
      <TabLabel />
      <NewTab $circle={false}><Plus size={17} strokeWidth={2.4} /></NewTab>
      <PlainControls>
        <Minus size={15} strokeWidth={1.4} />
        <Copy size={14} strokeWidth={1.6} />
        <X size={16} strokeWidth={1.2} />
      </PlainControls>
    </TabStrip>
    <RemoteBar>
      <RemotePin>⇥</RemotePin>
      <SignalBars><i /><i /><i /><i /></SignalBars>
      <RemoteTitle>192.168.181.163</RemoteTitle>
      <RemoteActions>
        <Minus size={9} strokeWidth={4} />
        <Copy size={11} strokeWidth={2.6} />
        <X size={12} strokeWidth={4} />
      </RemoteActions>
    </RemoteBar>
    <BrowserToolbar
      omni={(
        <>
          <OmniIcon $w={48}><EyeOff size={15} strokeWidth={2.4} /></OmniIcon>
          <OmniIcon $w={16}><Star size={16} fill="#1a73e8" color="#1a73e8" /></OmniIcon>
        </>
      )}
    >
      <ExtSlot><Camera size={17} color="#fff" fill="#9aa0a6" /></ExtSlot>
      <ExtSlot><AppWindow size={15} color="#4a90e2" /></ExtSlot>
      <ExtSlot><RssTile /></ExtSlot>
      <ExtSlot><RedStop /></ExtSlot>
      <ExtSlotTail letter="M" bg="#455a64" />
    </BrowserToolbar>
    <Bookmarks items={rightBookmarks} />
    <Page widths={rightNavWidths} heavy process="Inventory Return (20200825 17:08:17)" started="8/26/2020 3:41:07 AM">
      <Watermark>
        <strong>Activate Windows</strong>
        Go to Settings to activate Windows.
      </Watermark>
    </Page>
    <PageFooter />
    <Win10Bar>
      <Win10Slot $w={48}><WinLogo /></Win10Slot>
      <Win10Slot $w={48}><Mirrored><Search size={20} strokeWidth={1.4} /></Mirrored></Win10Slot>
      <Win10Slot $w={51}><Copy size={18} strokeWidth={1.4} /></Win10Slot>
      <Win10Slot $w={49} $open><Explorer10 /></Win10Slot>
      <Win10Slot $w={49}><ChromeLogo size={24} /></Win10Slot>
      <Win10Slot $w={49} $open><UiRed /></Win10Slot>
      <Win10Slot $w={49} $open><UiSolid w={24} h={30} bg="#004a9f" /></Win10Slot>
      <Win10Slot $w={48} $active $open><ChromeLogo size={24} /></Win10Slot>
      <Tray>
        <TrayIcon $w={24}><ChevronUp size={16} strokeWidth={1.6} /></TrayIcon>
        <TrayIcon $w={24}><Monitor size={17} strokeWidth={1.4} /></TrayIcon>
        <TrayIcon $w={24}><Volume2 size={17} strokeWidth={1.4} /></TrayIcon>
        <Clock $w={60}>3:41 AM<br />8/26/2020</Clock>
        <NoticeWrap>
          <svg width="14" height="18" viewBox="0 0 14 18"><path d="M0 0h14v14H5l-3 4v-4H0z" fill="#fff" /><path d="M3 4h8M3 7h8M3 10h5" stroke="#000" /></svg>
          <NoticeBadge>1</NoticeBadge>
        </NoticeWrap>
      </Tray>
    </Win10Bar>
    <Bubble $w={320}>
      <BubbleClose><X size={15} strokeWidth={2} /></BubbleClose>
      <BubbleTitle>Restore pages?</BubbleTitle>
      <BubbleText>Chrome didn&apos;t shut down correctly.</BubbleText>
      <BubbleActions>
        <BubbleButton $primary $w={73}>Restore</BubbleButton>
        <BubbleButton $w={140}>Open startup pages</BubbleButton>
      </BubbleActions>
    </Bubble>
  </ScreenBox>
);

const App = () => (
  <>
    <GlobalStyle />
    <Desktop>
      <LeftScreen />
      <RightScreen />
    </Desktop>
  </>
);

export default App;
